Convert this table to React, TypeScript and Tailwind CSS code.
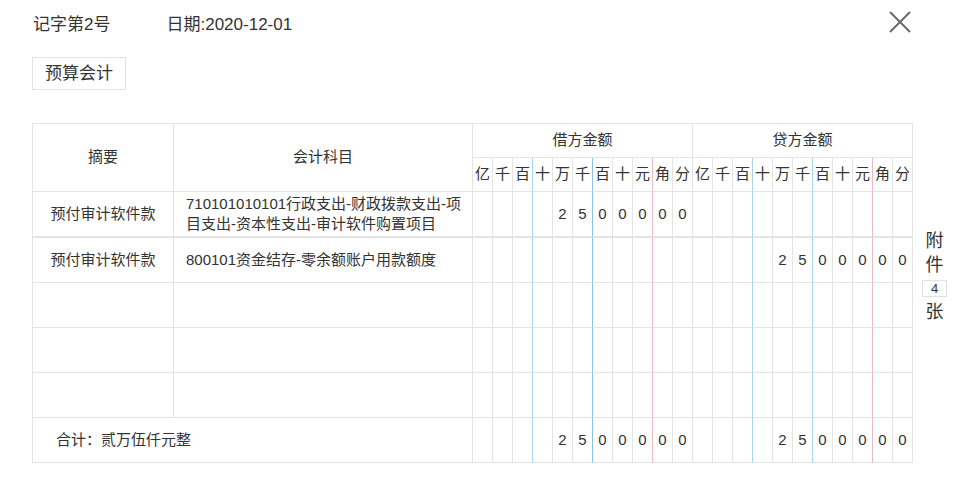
import React from "react";

const labels = ["亿", "千", "百", "十", "万", "千", "百", "十", "元", "角", "分"];

function rightBorder(i: number, debit: boolean): string {
  if (i === 2) return "border-r border-r-[#abd4ee]";
  if (i === 5) return debit ? "border-r border-r-[#8cc2e6]" : "border-r border-r-[#abd4ee]";
  if (i === 8) return "border-r border-r-[#ecbcc6]";
  return "border-r border-r-[#e4e4e4]";
}

type Row = { summary: string; account: string[]; debit: string[]; credit: string[]; h: string; thick?: boolean };

const amount = ["", "", "", "", "2", "5", "0", "0", "0", "0", "0"];
const empty = Array(11).fill("");

const rows: Row[] = [
  {
    summary: "预付审计软件款",
    account: ["710101010101行政支出-财政拨款支出-项", "目支出-资本性支出-审计软件购置项目"],
    debit: amount,
    credit: empty,
    h: "h-[46px]",
    thick: true,
  },
  { summary: "预付审计软件款", account: ["800101资金结存-零余额账户用款额度"], debit: empty, credit: amount, h: "h-[45px]" },
  { summary: "", account: [], debit: empty, credit: empty, h: "h-[45px]" },
  { summary: "", account: [], debit: empty, credit: empty, h: "h-[45px]" },
  { summary: "", account: [], debit: empty, credit: empty, h: "h-[45px]" },
];

function DigitCells({ vals, debit, thick }: { vals: string[]; debit: boolean; thick?: boolean }) {
  return (
    <>
      {vals.map((v, i) => (
        <td
          key={(debit ? "d" : "c") + i}
          className={
            "p-0 text-center align-middle text-[15px] text-[#333] " +
            (thick ? "border-b-2 border-b-[#e4e4e4] " : "border-b border-b-[#e4e4e4] ") +
            rightBorder(i, debit)
          }
        >
          {v}
        </td>
      ))}
    </>
  );
}

export default function App() {
  return (
    <div className="w-[959px] h-[490px] bg-white overflow-hidden font-['Liberation_Sans','Noto_Sans_CJK_SC',sans-serif] text-[#333]">
      <div className="pl-[32px]">
        <div className="w-[880px] h-[46px] flex items-center justify-between">
          <div className="flex items-center text-[17px] leading-[22px] pl-[1px] mt-[3px]">
            <span>记字第2号</span>
            <span className="ml-[56px]">日期:2020-12-01</span>
          </div>
          <svg width="24" height="24" viewBox="0 0 24 24" className="mt-[-2px]">
            <path d="M2 2 L22 22 M22 2 L2 22" stroke="#6b6b6b" strokeWidth="2" fill="none" />
          </svg>
        </div>
        <div className="mt-[11px] inline-flex items-center h-[33px] px-[12px] border border-[#e2e2e2] text-[17px] leading-[22px]">
          预算会计
        </div>
        <div className="mt-[33px] flex items-start">
          <table className="table-fixed border-separate border-spacing-0 border-l border-t border-[#e4e4e4]">
            <colgroup>
              <col className="w-[141px]" />
              <col className="w-[299px]" />
              {Array.from({ length: 22 }).map((_, i) => (
                <col key={i} className="w-[20px]" />
              ))}
            </colgroup>
            <thead>
              <tr className="h-[34px]">
                <th rowSpan={2} className="p-0 font-normal text-[15px] border-r border-b border-[#e4e4e4] align-middle">
                  摘要
                </th>
                <th rowSpan={2} className="p-0 font-normal text-[15px] border-r border-b border-[#e4e4e4] align-middle">
                  会计科目
                </th>
                <th colSpan={11} className="p-0 font-normal text-[15px] border-r border-b border-[#e4e4e4] align-middle">
                  借方金额
                </th>
                <th colSpan={11} className="p-0 font-normal text-[15px] border-r border-b border-[#e4e4e4] align-middle">
                  贷方金额
                </th>
              </tr>
              <tr className="h-[34px]">
                {labels.map((l, i) => (
                  <th
                    key={"dl" + i}
                    className={"p-0 font-normal text-[15px] border-b border-b-[#e4e4e4] " + rightBorder(i, true)}
                  >
                    {l}
                  </th>
                ))}
                {labels.map((l, i) => (
                  <th
                    key={"cl" + i}
                    className={"p-0 font-normal text-[15px] border-b border-b-[#e4e4e4] " + rightBorder(i, false)}
                  >
                    {l}
                  </th>
                ))}
              </tr>
            </thead>
            <tbody>
              {rows.map((r, ri) => (
                <tr key={ri} className={r.h}>
                  <td
                    className={
                      "p-0 text-center text-[15px] border-r border-r-[#e4e4e4] " +
                      (r.thick ? "border-b-2 border-b-[#e4e4e4]" : "border-b border-b-[#e4e4e4]")
                    }
                  >
                    {r.summary}
                  </td>
                  <td
                    className={
                      "py-0 pl-[12px] pr-[3px] text-left text-[15px] leading-[20px] border-r border-r-[#e4e4e4] " +
                      (r.thick ? "border-b-2 border-b-[#e4e4e4]" : "border-b border-b-[#e4e4e4]")
                    }
                  >
                    {r.account.map((a, ai) => (
                      <div key={ai}>{a}</div>
                    ))}
                  </td>
                  <DigitCells vals={r.debit} debit={true} thick={r.thick} />
                  <DigitCells vals={r.credit} debit={false} thick={r.thick} />
                </tr>
              ))}
              <tr className="h-[45px]">
                <td colSpan={2} className="p-0 pl-[23px] text-left text-[15px] border-r border-b border-[#e4e4e4]">
                  合计：贰万伍仟元整
                </td>
                <DigitCells vals={amount} debit={true} />
                <DigitCells vals={amount} debit={false} />
              </tr>
            </tbody>
          </table>
          <div className="ml-[9px] mt-[106px] w-[25px] flex flex-col items-center text-[18px] leading-[24px] text-[#333]">
            <span>附</span>
            <span>件</span>
            <span className="my-[3px] w-[25px] h-[17px] border border-[#e2e2e2] text-[13px] leading-[15px] text-center">4</span>
            <span>张</span>
          </div>
        </div>
      </div>
    </div>
  );
}
